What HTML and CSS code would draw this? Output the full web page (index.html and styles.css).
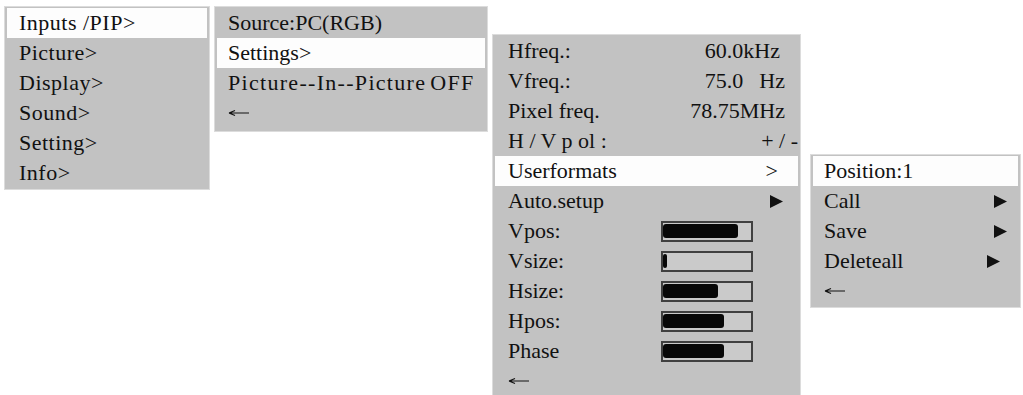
FILE: index.html
```html
<!DOCTYPE html>
<html>
<head>
<meta charset="utf-8">
<link rel="stylesheet" href="styles.css">
</head>
<body>
<div class="screen">
  <div class="panel p1">
    <div class="row sel">Inputs /PIP&gt;</div>
    <div class="row">Picture&gt;</div>
    <div class="row">Display&gt;</div>
    <div class="row">Sound&gt;</div>
    <div class="row">Setting&gt;</div>
    <div class="row">Info&gt;</div>
  </div>
  <div class="panel p2">
    <div class="row">Source:PC(RGB)</div>
    <div class="row sel">Settings&gt;</div>
    <div class="row wide">Picture--In--Picture<span class="off">OFF</span></div>
    <div class="row"><svg class="back" viewBox="0 0 22 10" width="22" height="10"><path d="M1 5H21M1 5L7 2.5M1 5L7 7.5" fill="none" stroke="#111" stroke-width="1.2"/></svg></div>
  </div>
  <div class="panel p3">
    <div class="row split"><span>Hfreq.:</span><span class="v-h">60.0kHz</span></div>
    <div class="row split"><span>Vfreq.:</span><span>75.0<span class="gap">Hz</span></span></div>
    <div class="row split"><span>Pixel freq.</span><span>78.75MHz</span></div>
    <div class="row split"><span>H / V p ol :</span><span class="v-pol">+ / -</span></div>
    <div class="row split sel"><span>Userformats</span><span class="v-gt">&gt;</span></div>
    <div class="row split"><span>Auto.setup</span><svg class="tri v-tri" viewBox="0 0 13 13" width="13" height="13"><polygon points="0,0 13,6.5 0,13" fill="#111"/></svg></div>
    <div class="row"><span class="lbl">Vpos:</span><div class="bar"><div class="fill" style="width:86%"></div></div></div>
    <div class="row"><span class="lbl">Vsize:</span><div class="bar"><div class="fill" style="width:5%"></div></div></div>
    <div class="row"><span class="lbl">Hsize:</span><div class="bar"><div class="fill" style="width:63%"></div></div></div>
    <div class="row"><span class="lbl">Hpos:</span><div class="bar"><div class="fill" style="width:70%"></div></div></div>
    <div class="row"><span class="lbl">Phase</span><div class="bar"><div class="fill" style="width:70%"></div></div></div>
    <div class="row"><svg class="back" viewBox="0 0 22 10" width="22" height="10"><path d="M1 5H21M1 5L7 2.5M1 5L7 7.5" fill="none" stroke="#111" stroke-width="1.2"/></svg></div>
  </div>
  <div class="panel p4">
    <div class="row sel">Position:1</div>
    <div class="row split"><span>Call</span><svg class="tri" viewBox="0 0 13 13" width="13" height="13"><polygon points="0,0 13,6.5 0,13" fill="#111"/></svg></div>
    <div class="row split"><span>Save</span><svg class="tri" viewBox="0 0 13 13" width="13" height="13"><polygon points="0,0 13,6.5 0,13" fill="#111"/></svg></div>
    <div class="row split"><span>Deleteall</span><svg class="tri t-del" viewBox="0 0 13 13" width="13" height="13"><polygon points="0,0 13,6.5 0,13" fill="#111"/></svg></div>
    <div class="row"><svg class="back" viewBox="0 0 22 10" width="22" height="10"><path d="M1 5H21M1 5L7 2.5M1 5L7 7.5" fill="none" stroke="#111" stroke-width="1.2"/></svg></div>
  </div>
</div>
</body>
</html>
```
FILE: styles.css
```css
html, body {
  margin: 0;
  background: #ffffff;
  overflow: hidden;
}
body {
  font-family: "Liberation Serif", "Times New Roman", serif;
  font-size: 22px;
  color: #111111;
}
.screen {
  display: flex;
  align-items: flex-start;
  padding-left: 5px;
  height: 395px;
}
.panel {
  background: #c2c2c2;
  padding: 1px 2px;
  box-shadow: 0 0 0 1px #dcdcdc;
}
.p1 {
  margin-top: 7px;
  width: 200px;
  letter-spacing: 0.5px;
}
.p2 {
  margin-top: 7px;
  margin-left: 6px;
  width: 268px;
  padding-bottom: 3px;
}
.p3 {
  margin-top: 35px;
  margin-left: 6px;
  width: 303px;
}
.p4 {
  margin-top: 155px;
  margin-left: 11px;
  width: 205px;
}
.row {
  height: 30px;
  line-height: 30px;
  padding: 0 12px;
  display: flex;
  align-items: center;
  white-space: pre;
}
.p2 .row { padding-left: 11px; }
.p3 .row { padding: 0 13px; }
.p4 .row { padding: 0 11px; }
.sel { background: #fdfdfd; }
.wide { letter-spacing: 1.3px; }
.off { margin-left: 4px; }
.split { justify-content: space-between; }
.gap { margin-left: 16px; }
.v-h { margin-right: 5px; }
.v-pol { margin-right: -13px; }
.v-gt { margin-right: 7px; }
.v-tri { margin-right: 2px; }
.t-del { margin-right: 7px; }
.lbl { width: 153px; }
.bar {
  width: 92px;
  height: 21px;
  box-sizing: border-box;
  border: 2px solid #404040;
  background: #cacaca;
  display: flex;
  align-items: center;
  padding-right: 1px;
}
.fill {
  height: 14px;
  background: #080808;
  border-radius: 3px;
}
.back { display: block; }
.tri { display: block; }
```
